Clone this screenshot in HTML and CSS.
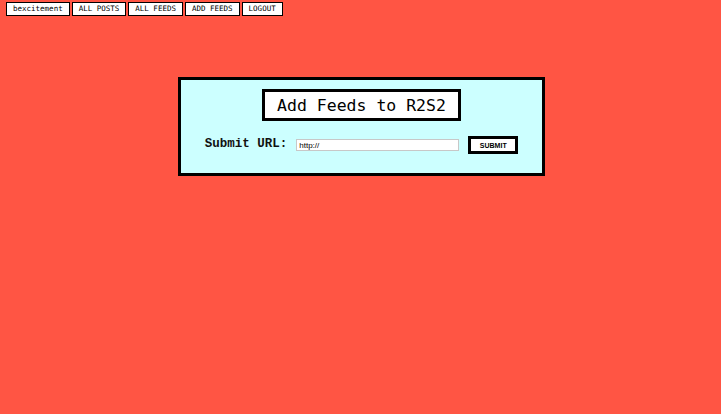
FILE: index.html
```html
<!DOCTYPE html>
<html>
<head>
<meta charset="utf-8">
<title>Add Feeds</title>
<link rel="stylesheet" href="styles.css">
</head>
<body>
<nav class="nav">
  <a class="nav-btn" href="#">bexcitement</a>
  <a class="nav-btn" href="#">ALL POSTS</a>
  <a class="nav-btn" href="#">ALL FEEDS</a>
  <a class="nav-btn" href="#">ADD FEEDS</a>
  <a class="nav-btn" href="#">LOGOUT</a>
</nav>
<main class="card">
  <h1 class="title">Add Feeds to R2S2</h1>
  <form class="form-row">
    <label class="label" for="url">Submit URL:</label>
    <input class="url-input" id="url" type="text" value="http://">
    <button class="submit" type="button">SUBMIT</button>
  </form>
</main>
</body>
</html>
```
FILE: styles.css
```css
html, body {
  margin: 0;
  padding: 0;
}
body {
  background: #ff5544;
  min-height: 414px;
  font-family: "DejaVu Sans Mono", monospace;
}
.nav {
  display: flex;
  gap: 2px;
  padding: 2px 0 0 6px;
}
.nav-btn {
  display: flex;
  align-items: center;
  justify-content: center;
  height: 14px;
  box-sizing: border-box;
  padding: 0 6px;
  background: #fff;
  border: 1px solid #000;
  color: #000;
  text-decoration: none;
  font-family: "DejaVu Sans Mono", monospace;
  font-size: 7.5px;
  line-height: 1;
}
.card {
  box-sizing: border-box;
  width: 367px;
  height: 99px;
  margin: 61px auto 0;
  position: relative;
  left: 1px;
  background: #ccffff;
  border: 3px solid #000;
  padding: 9px 0 0;
  display: flex;
  flex-direction: column;
  align-items: center;
}
.title {
  box-sizing: border-box;
  margin: 0;
  width: 199px;
  height: 32px;
  border: 3px solid #000;
  background: #fff;
  display: flex;
  align-items: center;
  justify-content: center;
  font-family: "DejaVu Sans Mono", monospace;
  font-weight: normal;
  font-size: 16.5px;
  color: #000;
}
.form-row {
  display: flex;
  align-items: center;
  margin: 15px 0 0;
  height: 18px;
}
.label {
  font-family: "Liberation Mono", "Courier New", monospace;
  font-weight: bold;
  font-size: 12.5px;
  color: #111;
  margin-right: 9px;
  position: relative;
  top: -1px;
}
.url-input {
  box-sizing: border-box;
  width: 163px;
  height: 12px;
  margin: 0 9px 0 0;
  padding: 0 2px;
  border: 1px solid #c8c8c8;
  background: #fff;
  font-family: "Liberation Sans", Arial, sans-serif;
  font-size: 8px;
  color: #000;
  outline: none;
}
.submit {
  box-sizing: border-box;
  width: 50px;
  height: 18px;
  padding: 0;
  border: 3px solid #000;
  background: #fff;
  font-family: "Liberation Sans", Arial, sans-serif;
  font-weight: bold;
  font-size: 7px;
  color: #000;
  cursor: pointer;
}
```
